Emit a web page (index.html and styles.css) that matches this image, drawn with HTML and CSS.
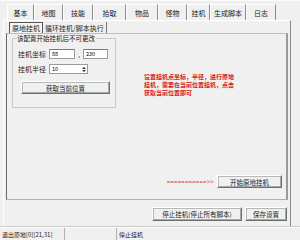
FILE: index.html
```html
<!DOCTYPE html>
<html>
<head>
    <meta charset="utf-8">
    <title>原地挂机</title>
    <link rel="stylesheet" href="styles.css">
</head>
<body>
<div class="window">
    <ul class="tabs">
        <li class="tab" style="width:27px">基本</li>
        <li class="tab" style="width:29px">地图</li>
        <li class="tab" style="width:30px">技能</li>
        <li class="tab" style="width:33px">拾取</li>
        <li class="tab" style="width:32px">物品</li>
        <li class="tab" style="width:29px">怪物</li>
        <li class="tab" style="width:23px">挂机</li>
        <li class="tab" style="width:36px">生成脚本</li>
        <li class="tab" style="width:30px">日志</li>
    </ul>
    <div class="page">
        <ul class="subtabs">
            <li class="subtab active">原地挂机</li>
            <li class="subtab">循环挂机/脚本执行</li>
        </ul>
        <div class="subpage">
            <div class="top">
                <fieldset class="group">
                    <legend>该配置开始挂机后不可更改</legend>
                    <div class="row">
                        <label>挂机坐标</label>
                        <input class="field x" type="text" value="88">
                        <span class="comma">,</span>
                        <input class="field y" type="text" value="230">
                    </div>
                    <div class="row">
                        <label>挂机半径</label>
                        <span class="spin">
                            <input class="field" type="text" value="10">
                            <span class="arrows"><i class="up"></i><i class="down"></i></span>
                        </span>
                    </div>
                    <button class="btn locate">获取当前位置</button>
                </fieldset>
                <p class="note">设置挂机点坐标，半径，进行原地<br>挂机，需要在当前位置挂机，点击<br>获取当前位置即可</p>
            </div>
            <div class="start-row">
                <span class="arrow">===========&gt;&gt;</span>
                <button class="btn start">开始原地挂机</button>
            </div>
        </div>
        <div class="actions">
            <button class="btn stop">停止挂机(停止所有脚本)</button>
            <button class="btn save">保存设置</button>
        </div>
    </div>
    <div class="statusbar">
        <span class="cell c1">退出原地[0][21,31]</span>
        <span class="cell c2"></span>
        <span class="cell c3">停止挂机</span>
    </div>
</div>
</body>
</html>
```

FILE: styles.css
```css
* {
    box-sizing: border-box;
}
body {
    margin: 0;
    background: #f0f0f0;
    font-family: "Noto Sans CJK SC", "Noto Sans", sans-serif;
    font-size: 6.5px;
    color: #1a1a1a;
}
.window {
    width: 300px;
    height: 240px;
    display: flex;
    flex-direction: column;
    background: #f0f0f0;
    border-top: 1px solid #fbfbfb;
}
.tabs {
    display: flex;
    margin: 3px 0 0 7px;
    padding: 0;
    list-style: none;
    height: 16px;
}
.tab {
    display: flex;
    align-items: center;
    justify-content: center;
    border-left: 1px solid #fff;
    border-top: 1px solid #fff;
    border-right: 1px solid #8c8c8c;
    font-size: 7px;
}
.page {
    margin-left: 3px;
    width: 288px;
    height: 207px;
    border: 1px solid #fff;
    border-right-color: #8a8a8a;
    border-bottom-color: #a0a0a0;
    display: flex;
    flex-direction: column;
}
.subtabs {
    display: flex;
    list-style: none;
    margin: 1px 0 0 5px;
    padding: 0;
    height: 11px;
}
.subtab {
    display: flex;
    align-items: center;
    padding: 0 2px;
    border-right: 1px solid #777;
    font-size: 7px;
}
.subtab.active {
    border: 1px solid #555;
    border-bottom: none;
    background: #f4f4f4;
}
.subpage {
    margin-left: 2px;
    width: 282px;
    height: 167px;
    border: 1px solid #bdbdbd;
    border-left: 1px solid #6a6a6a;
    border-right: 2px solid #9a9a9a;
    border-bottom: 1px solid #b0b0b0;
    display: flex;
    flex-direction: column;
    padding: 0 4px 11px 5px;
}
.top {
    display: flex;
}
.group {
    margin: 0;
    width: 104px;
    height: 74px;
    border: 1px solid #c8c8c8;
    padding: 0 0 0 4px;
}
.group legend {
    padding: 0 1px 0 0;
    font-size: 6.5px;
    line-height: 9px;
}
.row {
    display: flex;
    align-items: center;
    height: 10px;
    margin-top: 6px;
}
.row + .row {
    margin-top: 5px;
}
.row label {
    width: 32px;
    padding-left: 1px;
    font-size: 7px;
}
.field {
    height: 10px;
    border: 1px solid #9a9a9a;
    border-top-color: #7a7a7a;
    background: #fff;
    font: inherit;
    font-size: 5.5px;
    padding: 0 0 0 2px;
    outline: none;
}
.field.x {
    width: 26px;
}
.field.y {
    width: 25px;
}
.comma {
    width: 8px;
    text-align: center;
}
.spin {
    display: flex;
    width: 39px;
    height: 10px;
    background: #fff;
    border: 1px solid #9a9a9a;
}
.spin .field {
    border: none;
    height: 8px;
    width: 31px;
}
.arrows {
    width: 7px;
    display: flex;
    flex-direction: column;
    justify-content: center;
    gap: 1px;
    align-items: center;
}
.arrows i {
    width: 0;
    height: 0;
    border-left: 2px solid transparent;
    border-right: 2px solid transparent;
}
.arrows .up {
    border-bottom: 2px solid #333;
}
.arrows .down {
    border-top: 2px solid #333;
}
.btn {
    font: inherit;
    font-size: 6.5px;
    color: #1a1a1a;
    background: #f0f0f0;
    border: 1px solid #fff;
    border-right-color: #6e6e6e;
    border-bottom-color: #6e6e6e;
    box-shadow: 1px 1px 0 #b8b8b8 inset, -1px -1px 0 #a8a8a8 inset;
    padding: 0;
}
.locate {
    display: block;
    margin: 7px 0 0 4px;
    width: 89px;
    height: 13px;
}
.note {
    margin: 39px 0 0 28px;
    color: #d8202a;
    font-weight: bold;
    font-size: 6px;
    line-height: 8px;
}
.start-row {
    margin-top: auto;
    display: flex;
    justify-content: flex-end;
    align-items: center;
    gap: 3px;
}
.arrow {
    color: #e0303a;
    font-size: 6px;
    letter-spacing: 0.3px;
}
.start {
    width: 65px;
    height: 13px;
}
.actions {
    display: flex;
    justify-content: flex-end;
    gap: 3px;
    margin-top: 7px;
    padding-right: 3px;
}
.stop {
    width: 90px;
    height: 14px;
}
.save {
    width: 42px;
    height: 14px;
}
.statusbar {
    display: flex;
    height: 13px;
    margin-top: auto;
    border-top: 1px solid #fff;
    box-shadow: 0 -1px 0 #c8c8c8;
    align-items: stretch;
}
.cell {
    display: flex;
    align-items: center;
    padding-left: 2px;
    border-right: 1px solid #b0b0b0;
    font-size: 6px;
}
.c1 {
    width: 65px;
}
.c2 {
    width: 52px;
}
.c3 {
    border-right: none;
}
```
